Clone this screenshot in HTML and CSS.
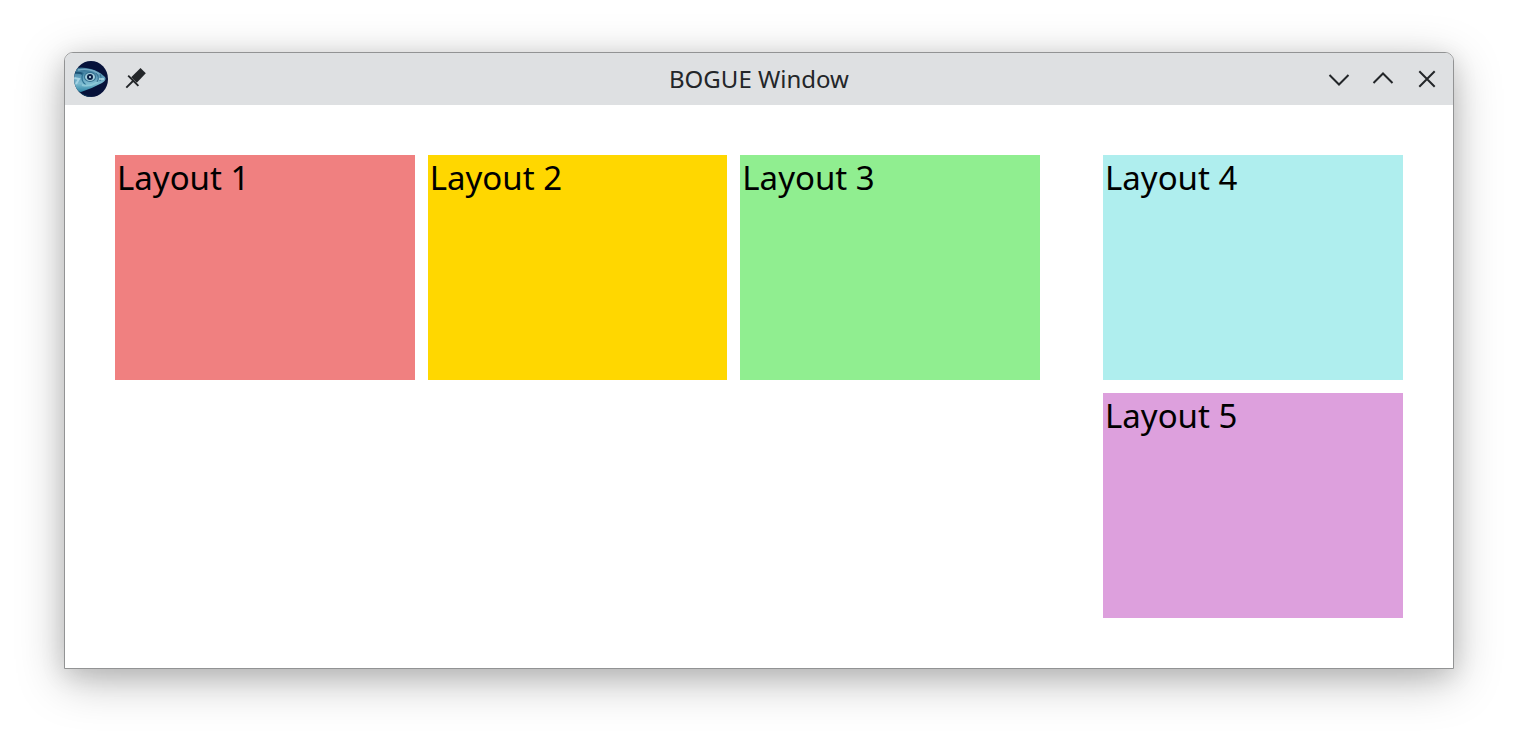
FILE: index.html
```html
<!DOCTYPE html>
<html lang="en">
<head>
<meta charset="utf-8">
<title>BOGUE Window</title>
<link rel="stylesheet" href="styles.css">
</head>
<body>
<div class="window">
  <header class="titlebar">
    <div class="tools">
      <button class="app-button" type="button" aria-label="Window menu">
        <svg width="36" height="36" viewBox="0 0 36 36" aria-hidden="true">
          <defs>
            <clipPath id="disc"><ellipse cx="18" cy="18" rx="17" ry="18"/></clipPath>
            <linearGradient id="skin" x1="0" y1="0" x2="0" y2="1">
              <stop offset="0" stop-color="#2f6a8c"/>
              <stop offset="0.4" stop-color="#5f9fbd"/>
              <stop offset="0.65" stop-color="#7dbbd0"/>
              <stop offset="1" stop-color="#2f86a6"/>
            </linearGradient>
            <filter id="soft" x="-10%" y="-10%" width="120%" height="120%"><feGaussianBlur stdDeviation="0.6"/></filter>
          </defs>
          <g clip-path="url(#disc)">
            <rect width="36" height="36" fill="#07123a"/>
            <path d="M0 26Q8 34 20 36H0Z" fill="#0d3458"/>
            <g filter="url(#soft)">
              <path d="M-1 8Q8 5 18 8Q26 10 32 16Q34 19 29 22Q20 27 8 31Q4 31 -1 28Z" fill="url(#skin)"/>
              <path d="M5 9Q13 7 21 10L28 14" fill="none" stroke="#78acc5" stroke-width="1.5"/>
              <path d="M0 12Q6 11 10 13" fill="none" stroke="#1d5376" stroke-width="2"/>
              <path d="M1 17L6 18L3 23" fill="none" stroke="#a5d3e4" stroke-width="2"/>
              <path d="M10 12Q7 20 13 24" fill="none" stroke="#2d7292" stroke-width="1.2"/>
              <path d="M9 24Q17 26 25 21" fill="none" stroke="#8cc8d8" stroke-width="2"/>
              <path d="M23 12Q27 16 24 21M27 13Q29 16 27 20" fill="none" stroke="#37708f" stroke-width="1"/>
              <path d="M26 18L31 18" fill="none" stroke="#b5dae4" stroke-width="1.5"/>
              <ellipse cx="17" cy="16" rx="6" ry="5" fill="#34718f"/>
              <ellipse cx="17" cy="16" rx="5" ry="4" fill="#a3cddc"/>
            </g>
            <circle cx="17" cy="16" r="3" fill="#0b2347"/>
            <circle cx="17" cy="16" r="1" fill="#dcf2fa"/>
          </g>
        </svg>
      </button>
      <button class="tool-button" type="button" aria-label="Keep on all desktops">
        <svg width="24" height="24" viewBox="0 0 24 24" aria-hidden="true">
          <path d="M17.5 1L22.8 6.3L13.8 15.8L8.2 10.2Z" fill="#232629"/>
          <path d="M5.2 8.6L15.4 18.8M3.3 20.7L11 13" fill="none" stroke="#232629" stroke-width="1.9"/>
        </svg>
      </button>
    </div>
    <h1 class="title">BOGUE Window</h1>
    <div class="controls">
      <button class="control" type="button" aria-label="Minimize">
        <svg width="24" height="24" viewBox="0 0 24 24" aria-hidden="true"><path d="M2.5 8L12 17.5L21.5 8"/></svg>
      </button>
      <button class="control" type="button" aria-label="Maximize">
        <svg width="24" height="24" viewBox="0 0 24 24" aria-hidden="true"><path d="M2.5 16L12 6.5L21.5 16"/></svg>
      </button>
      <button class="control" type="button" aria-label="Close">
        <svg width="24" height="24" viewBox="0 0 24 24" aria-hidden="true"><path d="M4.3 4.3L19.7 19.7M19.7 4.3L4.3 19.7"/></svg>
      </button>
    </div>
  </header>
  <main class="content">
    <div class="row">
      <section class="panel coral">Layout 1</section>
      <section class="panel gold">Layout 2</section>
      <section class="panel green">Layout 3</section>
    </div>
    <div class="column">
      <section class="panel turquoise">Layout 4</section>
      <section class="panel plum">Layout 5</section>
    </div>
  </main>
</div>
</body>
</html>
```
FILE: styles.css
```css
* {
  box-sizing: border-box;
}

body {
  margin: 0;
  padding: 52px 64px 76px;
  background: #fff;
  font-family: "Noto Sans", sans-serif;
}

.window {
  border: 1px solid #929394;
  border-radius: 9px 9px 0 0;
  background: #fff;
  box-shadow: 0 12px 48px rgba(0, 0, 0, 0.26), 0 6px 24px rgba(0, 0, 0, 0.12);
}

.titlebar {
  display: grid;
  grid-template-columns: 1fr auto 1fr;
  align-items: center;
  height: 52px;
  padding: 0 8px;
  border-radius: 8px 8px 0 0;
  background: #dee0e2;
  color: #232629;
}

.tools,
.controls {
  display: flex;
  align-items: center;
}

.tools {
  gap: 8px;
}

.controls {
  justify-content: flex-end;
  gap: 8px;
}

.app-button,
.tool-button,
.control {
  display: grid;
  place-items: center;
  width: 36px;
  height: 36px;
  padding: 0;
  border: 0;
  background: none;
}

.control path {
  fill: none;
  stroke: #232629;
  stroke-width: 2;
}

.title {
  margin: 0;
  font-size: 24px;
  font-weight: 400;
  line-height: 32px;
}

.content {
  display: grid;
  grid-template-columns: 925fr 300fr;
  align-items: start;
  gap: 63px;
  padding: 50px;
}

.row,
.column {
  display: grid;
  gap: 13px;
}

.row {
  grid-template-columns: repeat(3, 1fr);
}

.panel {
  height: 225px;
  padding: 0 2px;
  color: #000;
  font-size: 33px;
  line-height: 45px;
}

.coral {
  background: #f08080;
}

.gold {
  background: #ffd700;
}

.green {
  background: #90ee90;
}

.turquoise {
  background: #afeeee;
}

.plum {
  background: #dda0dd;
}
```
